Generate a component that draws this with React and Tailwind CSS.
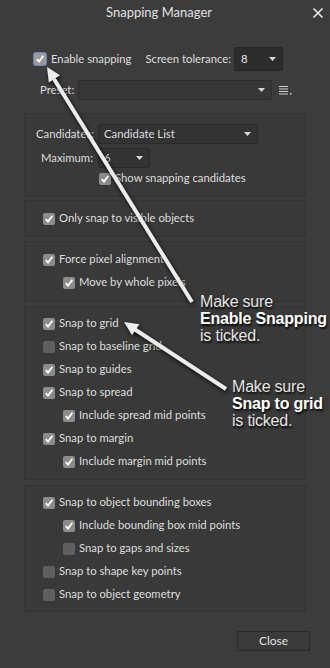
import { useState } from "react";

function Check({ checked, focus }) {
  return (
    <span
      className={`flex items-center justify-center w-[12px] h-[12px] rounded-[2px] shrink-0 ${
        checked ? "bg-[#8c8c8c]" : "bg-[#5f5f5f]"
      } ${focus ? "ring-1 ring-[#6f86b8] bg-[#9a9a9a]" : ""}`}
    >
      {checked && (
        <svg width="10" height="10" viewBox="0 0 10 10">
          <path d="M1.8 5.2 L4 7.6 L8.4 1.8" fill="none" stroke="#ffffff" strokeWidth="1.8" />
        </svg>
      )}
    </span>
  );
}

function Row({ label, checked, indent }) {
  return (
    <div className={`flex items-center h-[23px] gap-[4px] ${indent ? "pl-[38px]" : "pl-[18px]"}`}>
      <Check checked={checked} />
      <span className="text-[#dedede]">{label}</span>
    </div>
  );
}

function Caret() {
  return (
    <svg width="7" height="4" viewBox="0 0 7 4">
      <path d="M0 0 L7 0 L3.5 4 Z" fill="#d8d8d8" />
    </svg>
  );
}

function Select({ value, className }) {
  return (
    <div
      className={`flex items-center justify-between h-[20px] pl-[5px] pr-[6px] bg-[#333333] border border-[#2a2a2a] rounded-[2px] ${className}`}
    >
      <span className="text-[#dedede]">{value}</span>
      <Caret />
    </div>
  );
}

function Panel({ children, className }) {
  return (
    <div className={`mx-[24px] w-[282px] bg-[#393939] border border-[#333333] ${className}`}>
      {children}
    </div>
  );
}

export default function App() {
  const [open] = useState(true);
  if (!open) return null;

  return (
    <div
      className="relative w-[330px] h-[668px] bg-[#3c3c3c] overflow-hidden text-[11.3px]"
      style={{ fontFamily: 'Lato, "Open Sans", sans-serif' }}
    >
      {/* title bar */}
      <div className="relative flex items-center justify-center h-[26px]">
        <span className="text-[#e0e0e0] text-[13px] ml-[-12px]">Snapping Manager</span>
        <svg className="absolute right-[6px] top-[7px]" width="12" height="12" viewBox="0 0 12 12">
          <path d="M1.5 1.5 L10.5 10.5 M10.5 1.5 L1.5 10.5" stroke="#e8e8e8" strokeWidth="1.6" />
        </svg>
      </div>

      {/* enable + tolerance */}
      <div className="flex items-center h-[24px] mt-[21px] pl-[34px]">
        <Check checked focus />
        <span className="ml-[5px] text-[#dedede]">Enable snapping</span>
        <span className="ml-[14px] text-[#dedede]">Screen tolerance:</span>
        <div className="ml-[3px] flex items-center justify-between w-[49px] h-[24px] pl-[6px] pr-[6px] bg-[#2c2c2c] border border-[#252525] rounded-[2px]">
          <span className="text-[#e6e6e6]">8</span>
          <Caret />
        </div>
      </div>

      {/* preset */}
      <div className="flex items-center h-[20px] mt-[9px] pl-[40px]">
        <span className="text-[#dedede]">Preset:</span>
        <Select value="" className="ml-[4px] w-[194px] bg-[#363636] border-[#2d2d2d]" />
        <svg className="ml-[7px]" width="14" height="10" viewBox="0 0 14 10">
          <path d="M0 1.5 H9 M0 4 H9 M0 6.5 H9 M0 9 H9" stroke="#d0d0d0" strokeWidth="1.2" />
          <rect x="11" y="8" width="1.5" height="1.5" fill="#d0d0d0" />
        </svg>
      </div>

      {/* candidates */}
      <Panel className="mt-[13px] pt-[10px] pb-[7px]">
        <div className="flex items-center h-[20px] pl-[11px]">
          <span className="text-[#dedede]">Candidates:</span>
          <Select value="Candidate List" className="ml-[4px] w-[160px]" />
        </div>
        <div className="flex items-center h-[20px] mt-[4px] pl-[16px]">
          <span className="text-[#dedede]">Maximum:</span>
          <Select value="6" className="ml-[5px] w-[52px]" />
        </div>
        <div className="flex items-center h-[21px] pl-[74px] gap-[4px]">
          <Check checked />
          <span className="text-[#dedede]">Show snapping candidates</span>
        </div>
      </Panel>

      <Panel className="mt-[3px] py-[6px]">
        <Row label="Only snap to visible objects" checked />
      </Panel>

      <Panel className="mt-[4px] pt-[6px] pb-[7px]">
        <Row label="Force pixel alignment" checked />
        <Row label="Move by whole pixels" checked indent />
      </Panel>

      <Panel className="mt-[4px] pt-[5px] pb-[6px]">
        <Row label="Snap to grid" checked />
        <Row label="Snap to baseline grid" />
        <Row label="Snap to guides" checked />
        <Row label="Snap to spread" checked />
        <Row label="Include spread mid points" checked indent />
        <Row label="Snap to margin" checked />
        <Row label="Include margin mid points" checked indent />
      </Panel>

      <Panel className="mt-[5px] pt-[5px] pb-[5px]">
        <Row label="Snap to object bounding boxes" checked />
        <Row label="Include bounding box mid points" checked indent />
        <Row label="Snap to gaps and sizes" indent />
        <Row label="Snap to shape key points" />
        <Row label="Snap to object geometry" />
      </Panel>

      <div className="flex justify-end pr-[20px] mt-[19px]">
        <div className="flex items-center justify-center w-[73px] h-[20px] bg-[#3a3a3a] border border-[#2b2b2b] text-[#e0e0e0] text-[12px]">
          Close
        </div>
      </div>

      {/* annotation arrows */}
      <svg
        className="absolute left-0 top-0 pointer-events-none"
        width="330"
        height="668"
        viewBox="0 0 330 668"
        style={{ filter: "drop-shadow(1px 2px 2px rgba(0,0,0,0.8))" }}
      >
        <line x1="54" y1="79" x2="192" y2="302" stroke="#ececec" strokeWidth="4" />
        <polygon points="47,67 48.8,82.5 60,75.2" fill="#ececec" />
        <line x1="135" y1="329.5" x2="226" y2="389" stroke="#ececec" strokeWidth="4" />
        <polygon points="124,322 132,335.2 139.4,324.2" fill="#ececec" />
      </svg>

      <div
        className="absolute left-[200px] top-[293px] text-[16px] leading-[17px] tracking-[-0.2px] text-[#e4e4e4] [text-shadow:1px_2px_2px_rgba(0,0,0,0.9)]"
        style={{ fontFamily: '"Liberation Sans", Arial, sans-serif' }}
      >
        <div>Make sure</div>
        <div className="font-bold text-white">Enable Snapping</div>
        <div>is ticked.</div>
      </div>
      <div
        className="absolute left-[232px] top-[378px] text-[16px] leading-[17px] tracking-[-0.2px] text-[#e4e4e4] [text-shadow:1px_2px_2px_rgba(0,0,0,0.9)]"
        style={{ fontFamily: '"Liberation Sans", Arial, sans-serif' }}
      >
        <div>Make sure</div>
        <div className="font-bold text-white">Snap to grid</div>
        <div>is ticked.</div>
      </div>
    </div>
  );
}
